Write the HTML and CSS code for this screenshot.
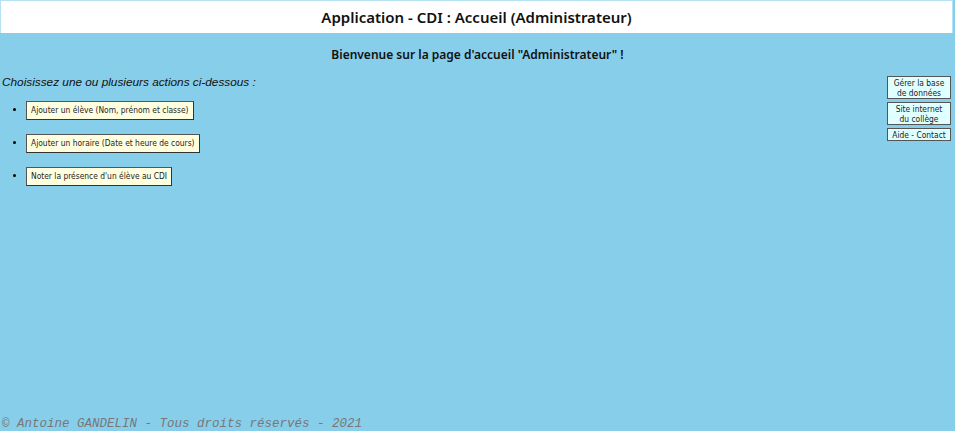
FILE: index.html
```html
<!DOCTYPE html>
<html lang="fr">
<head>
  <meta charset="UTF-8">
  <meta name="viewport" content="width=device-width, initial-scale=1.0">
  <link rel="stylesheet" href="styles.css">
  <title>Application - CDI : Accueil</title>
</head>
<body>
  <header class="top-bar">
    <h1>Application - CDI : Accueil (Administrateur)</h1>
  </header>
  <h2 class="welcome">Bienvenue sur la page d'accueil "Administrateur" !</h2>
  <div class="main">
    <div class="actions">
      <p class="intro">Choisissez une ou plusieurs actions ci-dessous :</p>
      <ul class="action-list">
        <li><button type="button" class="action-btn">Ajouter un élève (Nom, prénom et classe)</button></li>
        <li><button type="button" class="action-btn">Ajouter un horaire (Date et heure de cours)</button></li>
        <li><button type="button" class="action-btn">Noter la présence d'un élève au CDI</button></li>
      </ul>
    </div>
    <aside class="side-links">
      <button type="button" class="side-btn">Gérer la base<br>de données</button>
      <button type="button" class="side-btn">Site internet<br>du collège</button>
      <button type="button" class="side-btn">Aide - Contact</button>
    </aside>
  </div>
  <footer class="copyright">© Antoine GANDELIN - Tous droits réservés - 2021</footer>
</body>
</html>
```

FILE: styles.css
```css
html, body {
  height: 100%;
}
body {
  margin: 0;
  background-color: #87ceeb;
  font-family: 'Liberation Sans', Arial, sans-serif;
  display: flex;
  flex-direction: column;
}
.top-bar {
  background-color: #ffffff;
  border: 1px solid #b4e2f4;
  border-bottom: none;
  margin-right: 2px;
  height: 32px;
  display: flex;
  align-items: center;
  justify-content: center;
}
.top-bar h1 {
  margin: 0;
  font-family: 'Noto Sans', sans-serif;
  font-size: 15px;
  font-weight: 600;
  color: #111111;
}
.welcome {
  margin: 13px 0 0;
  text-align: center;
  font-family: 'Noto Sans', sans-serif;
  font-size: 12px;
  font-weight: 600;
  color: #111111;
}
.main {
  display: flex;
  justify-content: space-between;
  margin-top: 12px;
}
.intro {
  margin: 0 0 0 2px;
  font-style: italic;
  font-size: 11.8px;
  color: #111111;
}
.action-list {
  margin: 12px 0 0;
  padding-left: 26px;
}
.action-list li {
  margin-bottom: 14px;
  font-size: 10px;
}
.action-btn {
  font-family: 'DejaVu Sans Condensed', 'DejaVu Sans', sans-serif;
  font-stretch: condensed;
  font-size: 8.4px;
  color: #222222;
  background-color: #ffffe0;
  border: 1px solid #555555;
  border-right-color: #333333;
  border-bottom-color: #333333;
  padding: 3px 4px 4px;
  cursor: pointer;
}
.side-links {
  display: flex;
  flex-direction: column;
  align-items: stretch;
  gap: 3px;
  width: 64px;
  margin: 1px 4px 0 0;
}
.side-btn {
  font-family: 'DejaVu Sans Condensed', 'DejaVu Sans', sans-serif;
  font-stretch: condensed;
  font-size: 8.4px;
  line-height: 10px;
  color: #222222;
  background-color: #e0ffff;
  border: 1px solid #555555;
  padding: 1px 2px 0;
  cursor: pointer;
}
.copyright {
  margin-top: auto;
  padding: 0 0 0 2px;
  font-family: 'Liberation Mono', 'Courier New', monospace;
  font-style: italic;
  font-size: 12.5px;
  line-height: 14px;
  color: #777777;
}
```
